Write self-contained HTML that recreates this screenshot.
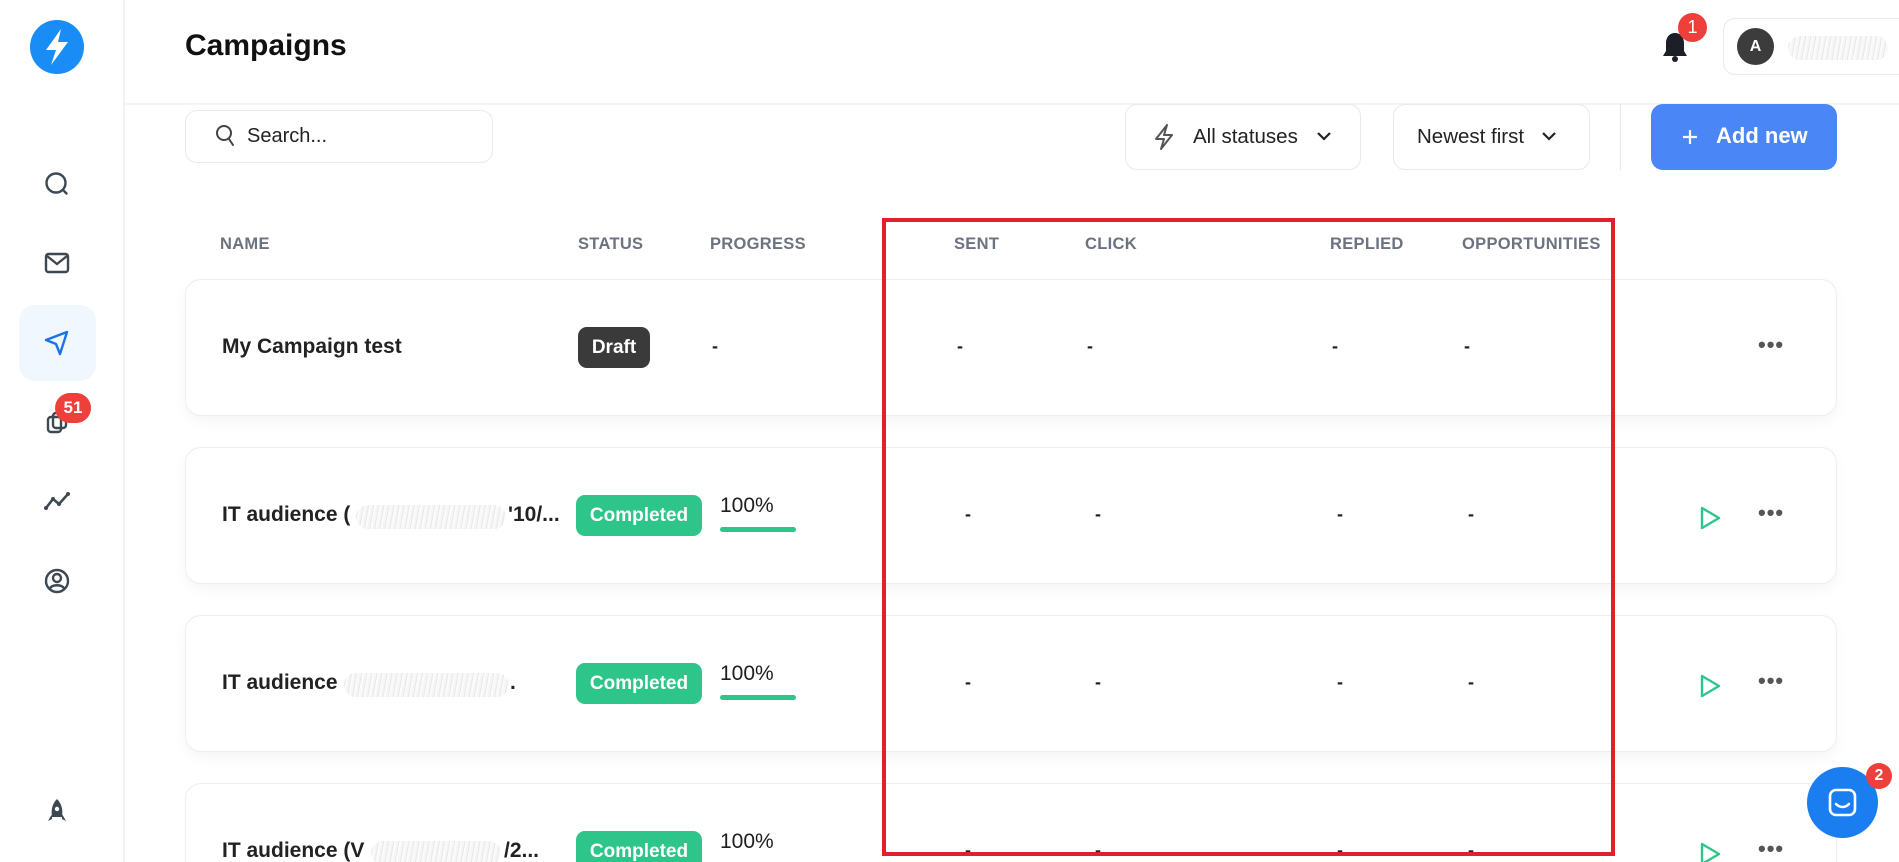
<!DOCTYPE html>
<html><head><meta charset="utf-8"><style>
*{box-sizing:border-box;margin:0;padding:0}
html,body{width:1899px;height:862px;overflow:hidden}
body{background:#fff;font-family:"Liberation Sans",sans-serif;position:relative;color:#1a1a1a}
#wrap{position:absolute;left:0;top:0;width:1899px;height:862px;overflow:hidden}
.a{position:absolute}
.side{left:0;top:0;width:125px;height:862px;border-right:2px solid #f2f3f5;background:#fff}
.ic{width:28px;height:28px;left:43px}
.hdr{left:125px;top:0;width:1774px;height:105px;border-bottom:2px solid #f3f4f6}
.box{border:1px solid #e8eaed;border-radius:12px;background:#fff}
.th{top:235px;font-size:16.5px;font-weight:bold;color:#6b7280;letter-spacing:.3px}
.row{left:185px;width:1652px;height:137px;border:1px solid #eceef0;border-radius:16px;background:#fff;box-shadow:0 6px 14px rgba(0,0,0,.04)}
.nm{left:36px;top:55px;font-size:21px;font-weight:bold;color:#222}
.badge{top:47px;height:41px;border-radius:9px;color:#fff;font-weight:bold;font-size:19px;line-height:41px;text-align:center}
.dash{top:56px;font-size:18px;color:#222;font-weight:bold}
.pct{left:534px;top:46px;font-size:21px;color:#1d1d1f}
.bar{left:534px;top:79px;width:76px;height:5px;background:#2ec58a;border-radius:3px}
.dots{left:1572px;top:52px;font-size:22px;color:#555;letter-spacing:1px;font-weight:bold}
.blur{height:24px;background:repeating-linear-gradient(100deg,#f3f3f3 0 2px,#e2e2e2 2px 3px,#fafafa 3px 5px);border-radius:12px;opacity:.8}
</style></head><body><div id="wrap">
<div class="a side"></div>
<svg class="a" style="left:30px;top:20px" width="54" height="54" viewBox="0 0 54 54"><circle cx="27" cy="27" r="27" fill="#1a8cf5"/><path d="M31 9 L16 30 H26 L21 45 L38 22 H28 Z" fill="#fff"/></svg>
<svg class="a ic" style="top:170px" viewBox="0 0 28 28"><circle cx="13" cy="13" r="9.5" fill="none" stroke="#3d4852" stroke-width="2.4"/><path d="M21 21 L23.5 23.5" stroke="#3d4852" stroke-width="2.4" stroke-linecap="round"/></svg>
<svg class="a ic" style="top:249px" viewBox="0 0 28 28"><rect x="3" y="5" width="22" height="18" rx="2.5" fill="none" stroke="#3d4852" stroke-width="2.4"/><path d="M4 7 L14 15 L24 7" fill="none" stroke="#3d4852" stroke-width="2.4"/></svg>
<div class="a" style="left:19px;top:305px;width:77px;height:76px;border-radius:16px;background:#f0f7ff"></div>
<svg class="a ic" style="top:329px" viewBox="0 0 28 28"><path d="M24 3 L3 11 L13 15 L17 25 Z" fill="none" stroke="#1a73e8" stroke-width="2.4" stroke-linejoin="round"/></svg>
<svg class="a ic" style="top:409px" viewBox="0 0 28 28"><rect x="5" y="8" width="13" height="15" rx="3" fill="none" stroke="#3d4852" stroke-width="2.4"/><rect x="10" y="4" width="13" height="15" rx="3" fill="none" stroke="#3d4852" stroke-width="2.4"/></svg>
<div class="a" style="left:55px;top:393px;width:36px;height:30px;border-radius:15px;background:#ef3f3a;color:#fff;font-weight:bold;font-size:17px;text-align:center;line-height:30px">51</div>
<svg class="a ic" style="top:487px" viewBox="0 0 28 28"><path d="M3 21 L10 12 L16 17 L25 7" fill="none" stroke="#3d4852" stroke-width="2.6" stroke-linejoin="round"/><circle cx="3" cy="21" r="2" fill="#3d4852"/><circle cx="10" cy="12" r="2" fill="#3d4852"/><circle cx="16" cy="17" r="2" fill="#3d4852"/><circle cx="25" cy="7" r="2" fill="#3d4852"/></svg>
<svg class="a ic" style="top:567px" viewBox="0 0 28 28"><circle cx="14" cy="14" r="11" fill="none" stroke="#3d4852" stroke-width="2.4"/><circle cx="14" cy="11" r="4" fill="none" stroke="#3d4852" stroke-width="2.4"/><path d="M6.5 22 C9 17,19 17,21.5 22" fill="none" stroke="#3d4852" stroke-width="2.4"/></svg>
<svg class="a ic" style="top:797px" viewBox="0 0 28 28"><path d="M14 2 C19 7,20 13,19 20 H9 C8 13,9 7,14 2 Z M9 17 L5 24 L9 22 Z M19 17 L23 24 L19 22 Z" fill="#3d4852"/><circle cx="14" cy="12" r="2.2" fill="#fff"/></svg>

<div class="a hdr"></div>
<div class="a" style="left:185px;top:29px;font-size:30px;font-weight:bold;color:#111">Campaigns</div>
<svg class="a" style="left:1661px;top:31px" width="28" height="32" viewBox="0 0 28 32"><path d="M14 2 C8 2,5 7,5 12 V20 L2 25 H26 L23 20 V12 C23 7,20 2,14 2 Z" fill="#1c1f26"/><circle cx="14" cy="28" r="3" fill="#1c1f26"/></svg>
<div class="a" style="left:1678px;top:13px;width:29px;height:29px;border-radius:50%;background:#ef3f3a;color:#fff;font-size:18px;text-align:center;line-height:29px">1</div>
<div class="a box" style="left:1723px;top:18px;width:200px;height:57px"></div>
<div class="a" style="left:1737px;top:28px;width:37px;height:37px;border-radius:50%;background:#3c3c3c;color:#fff;font-weight:bold;font-size:16px;text-align:center;line-height:37px">A</div>
<div class="a blur" style="left:1788px;top:36px;width:100px"></div>

<div class="a box" style="left:185px;top:110px;width:308px;height:53px"></div>
<svg class="a" style="left:215px;top:124px" width="22" height="24" viewBox="0 0 22 24"><circle cx="9" cy="9" r="7" fill="none" stroke="#444" stroke-width="2"/><path d="M14 15 L18 21" stroke="#444" stroke-width="2" stroke-linecap="round"/></svg>
<div class="a" style="left:247px;top:125px;font-size:20px;color:#222">Search...</div>

<div class="a box" style="left:1125px;top:104px;width:236px;height:66px"></div>
<svg class="a" style="left:1152px;top:123px" width="24" height="28" viewBox="0 0 24 28"><path d="M15 2 L4 16 H12 L9 26 L20 12 H12 Z" fill="none" stroke="#555" stroke-width="2" stroke-linejoin="round"/></svg>
<div class="a" style="left:1193px;top:125px;font-size:20.5px;color:#222">All statuses</div>
<svg class="a" style="left:1316px;top:130px" width="16" height="12" viewBox="0 0 16 12"><path d="M2 3 L8 9 L14 3" fill="none" stroke="#222" stroke-width="2.2"/></svg>
<div class="a box" style="left:1393px;top:104px;width:197px;height:66px"></div>
<div class="a" style="left:1417px;top:125px;font-size:20.5px;color:#222">Newest first</div>
<svg class="a" style="left:1541px;top:130px" width="16" height="12" viewBox="0 0 16 12"><path d="M2 3 L8 9 L14 3" fill="none" stroke="#222" stroke-width="2.2"/></svg>
<div class="a" style="left:1620px;top:104px;width:1px;height:66px;background:#e5e7eb"></div>
<div class="a" style="left:1651px;top:104px;width:186px;height:66px;border-radius:12px;background:#4a86f5"></div>
<svg class="a" style="left:1681px;top:128px" width="18" height="18" viewBox="0 0 18 18"><path d="M9 2 V16 M2 9 H16" stroke="#fff" stroke-width="2.2"/></svg>
<div class="a" style="left:1716px;top:123px;font-size:22px;color:#fff;font-weight:bold">Add new</div>

<div class="a th" style="left:220px">NAME</div>
<div class="a th" style="left:578px">STATUS</div>
<div class="a th" style="left:710px">PROGRESS</div>
<div class="a th" style="left:954px">SENT</div>
<div class="a th" style="left:1085px">CLICK</div>
<div class="a th" style="left:1330px">REPLIED</div>
<div class="a th" style="left:1462px">OPPORTUNITIES</div>

<div class="a row" style="top:279px">
<div class="a nm">My Campaign test</div>
<div class="a badge" style="left:392px;width:72px;background:#3a3a3a">Draft</div>
<div class="a dash" style="left:526px">-</div>
<div class="a dash" style="left:771px">-</div>
<div class="a dash" style="left:901px">-</div>
<div class="a dash" style="left:1146px">-</div>
<div class="a dash" style="left:1278px">-</div>
<div class="a dots">•••</div>
</div>

<div class="a row" style="top:447px">
<div class="a nm">IT audience (</div><div class="a blur" style="left:170px;top:57px;width:150px"></div><div class="a nm" style="left:322px">'10/...</div>
<div class="a badge" style="left:390px;width:126px;background:#2ec58a">Completed</div>
<div class="a pct">100%</div><div class="a bar"></div>
<div class="a dash" style="left:779px">-</div>
<div class="a dash" style="left:909px">-</div>
<div class="a dash" style="left:1151px">-</div>
<div class="a dash" style="left:1282px">-</div>
<svg class="a" style="left:1512px;top:57px" width="24" height="26" viewBox="0 0 24 26"><path d="M4 3 L21 13 L4 23 Z" fill="none" stroke="#2ec58a" stroke-width="2.4" stroke-linejoin="round"/></svg>
<div class="a dots">•••</div>
</div>

<div class="a row" style="top:615px">
<div class="a nm">IT audience</div><div class="a blur" style="left:158px;top:57px;width:165px"></div><div class="a nm" style="left:324px">.</div>
<div class="a badge" style="left:390px;width:126px;background:#2ec58a">Completed</div>
<div class="a pct">100%</div><div class="a bar"></div>
<div class="a dash" style="left:779px">-</div>
<div class="a dash" style="left:909px">-</div>
<div class="a dash" style="left:1151px">-</div>
<div class="a dash" style="left:1282px">-</div>
<svg class="a" style="left:1512px;top:57px" width="24" height="26" viewBox="0 0 24 26"><path d="M4 3 L21 13 L4 23 Z" fill="none" stroke="#2ec58a" stroke-width="2.4" stroke-linejoin="round"/></svg>
<div class="a dots">•••</div>
</div>

<div class="a row" style="top:783px;height:79px;border-bottom:none;border-radius:16px 16px 0 0;box-shadow:none">
<div class="a nm">IT audience (V</div><div class="a blur" style="left:185px;top:57px;width:130px"></div><div class="a nm" style="left:318px">/2...</div>
<div class="a badge" style="left:390px;width:126px;height:32px;border-radius:9px 9px 0 0;background:#2ec58a">Completed</div>
<div class="a pct">100%</div>
<div class="a dash" style="left:779px">-</div>
<div class="a dash" style="left:909px">-</div>
<div class="a dash" style="left:1151px">-</div>
<div class="a dash" style="left:1282px">-</div>
<svg class="a" style="left:1512px;top:57px" width="24" height="22" viewBox="0 0 24 22"><path d="M4 3 L21 13 L4 23 Z" fill="none" stroke="#2ec58a" stroke-width="2.4" stroke-linejoin="round"/></svg>
<div class="a dots">•••</div>
</div>

<div class="a" style="left:882px;top:218px;width:733px;height:638px;border:4px solid #e0202a"></div>

<div class="a" style="left:1807px;top:767px;width:71px;height:71px;border-radius:50%;background:#1a7ef0"></div>
<svg class="a" style="left:1827px;top:787px" width="31" height="31" viewBox="0 0 31 31"><rect x="3" y="3" width="25" height="25" rx="6" fill="none" stroke="#fff" stroke-width="2.6"/><path d="M9 17 C13 21,18 21,22 17" fill="none" stroke="#fff" stroke-width="2.6" stroke-linecap="round"/></svg>
<div class="a" style="left:1866px;top:763px;width:26px;height:26px;border-radius:50%;background:#ef3f3a;color:#fff;font-weight:bold;font-size:16px;text-align:center;line-height:26px">2</div>
</div></body></html>
